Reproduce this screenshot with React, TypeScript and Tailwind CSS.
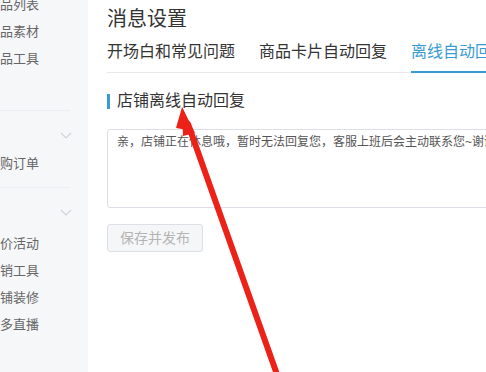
import React from 'react';

const font = "font-['Liberation_Sans','Noto_Sans_CJK_SC',sans-serif]";

const Chevron = () => (
  <svg width="12" height="7" viewBox="0 0 12 7" fill="none" stroke="#d0d3d9" strokeWidth="1.2">
    <path d="M1 1l5 5 5-5" />
  </svg>
);

const SideItem = ({ label }: { label: string }) => (
  <div className="h-[27px] flex items-center text-[13px] text-[#666] whitespace-nowrap">{label}</div>
);

const Sidebar = () => (
  <aside className="w-[88px] shrink-0 bg-[#f6f7f9] h-full overflow-hidden">
    <div className="mt-[-9px]">
      <SideItem label="品列表" />
      <SideItem label="品素材" />
      <SideItem label="品工具" />
    </div>
    <div className="mt-[38px] w-[70px] border-t border-[#eceef2]" />
    <div className="h-[48px] flex items-center justify-end pr-[16px]">
      <Chevron />
    </div>
    <div className="mt-[-9px]">
      <SideItem label="购订单" />
    </div>
    <div className="mt-[10px] w-[70px] border-t border-[#eceef2]" />
    <div className="h-[48px] flex items-center justify-end pr-[16px]">
      <Chevron />
    </div>
    <div className="mt-[-6px]">
      <SideItem label="价活动" />
      <SideItem label="销工具" />
      <SideItem label="铺装修" />
      <SideItem label="多直播" />
    </div>
  </aside>
);

const tabs = ['开场白和常见问题', '商品卡片自动回复', '离线自动回复'];

export default function App() {
  return (
    <div className={`relative w-[486px] h-[372px] flex bg-white overflow-hidden ${font}`}>
      <Sidebar />
      <main className="flex-1 min-w-0 pl-[19px] overflow-hidden">
        <h1 className="mt-[7px] text-[20px] leading-[24px] text-[#333] font-normal">消息设置</h1>
        <div className="mt-[11px] flex gap-[24px] border-b border-[#e8e8e8] whitespace-nowrap">
          {tabs.map((t, i) => (
            <div
              key={t}
              className={`pb-[9px] text-[16px] leading-[20px] ${
                i === 2 ? 'text-[#3a9bd2] border-b-2 border-[#3a9bd2] mb-[-1px]' : 'text-[#333]'
              }`}
            >
              {t}
            </div>
          ))}
        </div>
        <div className="mt-[19px] flex items-center h-[18px]">
          <span className="w-[3px] h-[15px] bg-[#3a9bd2] mr-[7px]" />
          <span className="text-[16px] leading-[18px] text-[#333] whitespace-nowrap">店铺离线自动回复</span>
        </div>
        <div className="mt-[19px] h-[79px] w-[420px] border border-[#dcdfe6] rounded-[3px] px-[9px] pt-[3px]">
          <p className="text-[12px] leading-[18px] text-[#555] whitespace-nowrap">
            亲，店铺正在休息哦，暂时无法回复您，客服上班后会主动联系您~谢谢
          </p>
        </div>
        <button className="mt-[16px] w-[96px] h-[28px] rounded-[3px] border border-[#dcdfe6] bg-[#f5f6f7] text-[14px] text-[#b4b4b4]">
          保存并发布
        </button>
      </main>
      <svg className="absolute left-0 top-0 pointer-events-none" width="486" height="372" viewBox="0 0 486 372">
        <line x1="279" y1="380" x2="188" y2="124" stroke="#ec2219" strokeWidth="6" strokeLinecap="round" />
        <polygon points="182,107 195,133 183,136" fill="#ec2219" />
        <polygon points="182,107 176,128 193,131" fill="#ec2219" />
      </svg>
    </div>
  );
}
